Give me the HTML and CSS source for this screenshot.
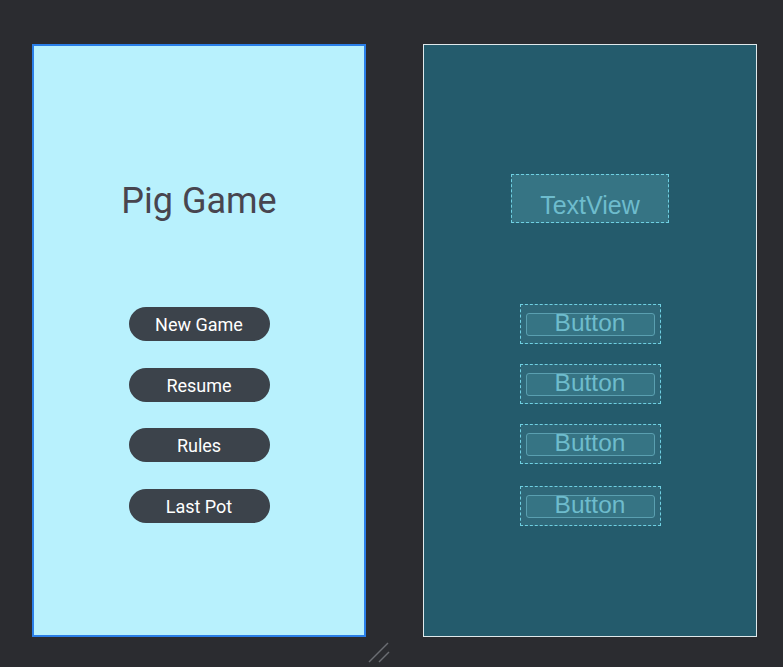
FILE: index.html
```html
<!DOCTYPE html>
<html>
<head>
<meta charset="utf-8">
<link rel="stylesheet" href="styles.css">
</head>
<body>
<div class="canvas">
  <div class="design">
    <div class="title">Pig Game</div>
    <div class="btn b1">New Game</div>
    <div class="btn b2">Resume</div>
    <div class="btn b3">Rules</div>
    <div class="btn b4">Last Pot</div>
  </div>
  <div class="blueprint">
    <div class="tv">TextView</div>
    <div class="bp b1"><div class="bp-inner">Button</div></div>
    <div class="bp b2"><div class="bp-inner">Button</div></div>
    <div class="bp b3"><div class="bp-inner">Button</div></div>
    <div class="bp b4"><div class="bp-inner">Button</div></div>
  </div>
  <svg class="handle" width="24" height="24" viewBox="0 0 24 24">
    <line x1="1" y1="22" x2="20" y2="3" stroke="#6b6d72" stroke-width="1.5"/>
    <line x1="11" y1="22" x2="21" y2="12" stroke="#6b6d72" stroke-width="1.5"/>
  </svg>
</div>
</body>
</html>
```
FILE: styles.css
```css
html, body {
  margin: 0;
  padding: 0;
  background: #2b2c30;
  width: 783px;
  height: 667px;
  overflow: hidden;
}
.canvas {
  position: relative;
  display: flex;
  gap: 57px;
  padding: 44px 0 0 32px;
  box-sizing: border-box;
  height: 667px;
}
.design {
  width: 334px;
  height: 593px;
  box-sizing: border-box;
  background: #b8f1fd;
  border: 2px solid #2a7fe8;
  display: flex;
  flex-direction: column;
  align-items: center;
  padding-top: 134px;
}
.title {
  font-family: Roboto, "Noto Sans", sans-serif;
  font-size: 36px;
  line-height: 42px;
  color: #48454f;
  height: 42px;
}
.btn {
  width: 141px;
  height: 34px;
  border-radius: 17px;
  background: #3c434b;
  color: #ffffff;
  font-family: Roboto, "Noto Sans", sans-serif;
  font-size: 18px;
  line-height: 36px;
  text-align: center;
}
.design .b1 { margin-top: 85px; }
.design .b2 { margin-top: 27px; }
.design .b3 { margin-top: 26px; }
.design .b4 { margin-top: 27px; }

.blueprint {
  width: 334px;
  height: 593px;
  box-sizing: border-box;
  background: #245b6c;
  border: 1px solid #e0e9eb;
  display: flex;
  flex-direction: column;
  align-items: center;
  padding-top: 129px;
}
.tv {
  width: 158px;
  height: 49px;
  box-sizing: border-box;
  border: 1px dashed #6fd0e2;
  background: #367484;
  color: #6ebccd;
  font-family: "Liberation Sans", Arial, sans-serif;
  font-size: 25px;
  line-height: 60px;
  text-align: center;
}
.bp {
  width: 141px;
  height: 40px;
  box-sizing: border-box;
  border: 1px dashed #6fd0e2;
  background: #2f6879;
  display: flex;
  align-items: center;
  justify-content: center;
}
.bp-inner {
  width: 129px;
  height: 23px;
  box-sizing: border-box;
  border: 1px solid #5a9fb0;
  border-radius: 3px;
  background: #367484;
  color: #6ebccd;
  font-family: "Liberation Sans", Arial, sans-serif;
  font-size: 24.5px;
  line-height: 18px;
  text-align: center;
}
.blueprint .b1 { margin-top: 81px; }
.blueprint .b2 { margin-top: 20px; }
.blueprint .b3 { margin-top: 20px; }
.blueprint .b4 { margin-top: 22px; }

.handle {
  position: absolute;
  left: 368px;
  top: 640px;
}
```
